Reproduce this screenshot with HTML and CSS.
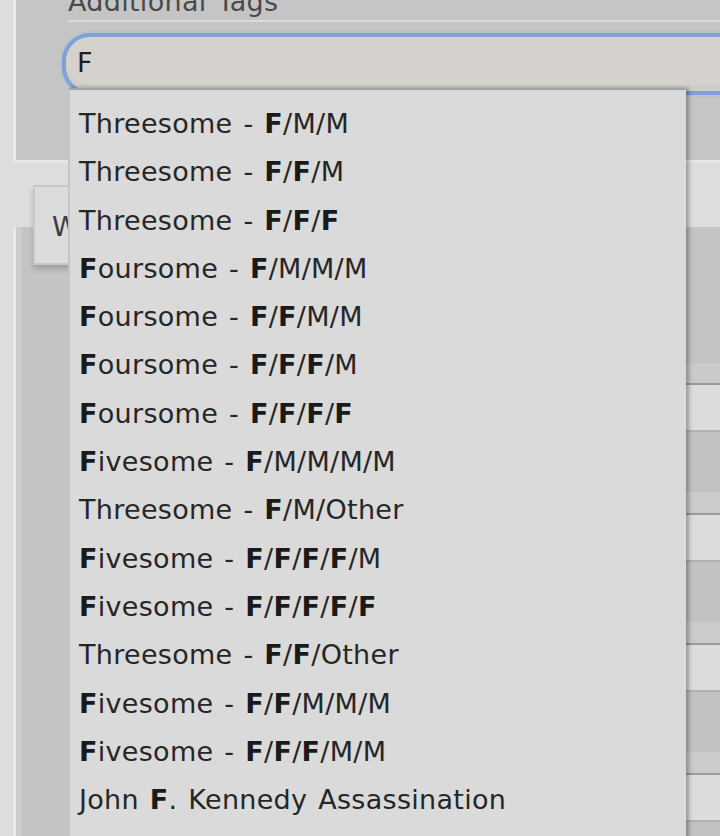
FILE: index.html
```html
<!DOCTYPE html>
<html lang="en">
<head>
<meta charset="utf-8">
<title>Additional Tags</title>
<link rel="stylesheet" href="styles.css">
</head>
<body>
<div class="page">
  <section class="panel top-panel">
    <div class="label">Additional Tags</div>
    <div class="input">F</div>
  </section>
  <div class="tabbar">
    <div class="tab">W</div>
  </div>
  <section class="panel table-panel">
    <div class="head"></div>
    <div class="rec"><div class="rec-light"></div><div class="rec-gray"></div></div>
    <div class="rec"><div class="rec-light"></div><div class="rec-gray"></div></div>
    <div class="rec"><div class="rec-light"></div><div class="rec-gray"></div></div>
    <div class="rec"><div class="rec-light"></div><div class="rec-gray"></div></div>
  </section>
  <ul class="dropdown">
    <li>Threesome - <b>F</b>/M/M</li>
    <li>Threesome - <b>F</b>/<b>F</b>/M</li>
    <li>Threesome - <b>F</b>/<b>F</b>/<b>F</b></li>
    <li><b>F</b>oursome - <b>F</b>/M/M/M</li>
    <li><b>F</b>oursome - <b>F</b>/<b>F</b>/M/M</li>
    <li><b>F</b>oursome - <b>F</b>/<b>F</b>/<b>F</b>/M</li>
    <li><b>F</b>oursome - <b>F</b>/<b>F</b>/<b>F</b>/<b>F</b></li>
    <li><b>F</b>ivesome - <b>F</b>/M/M/M/M</li>
    <li>Threesome - <b>F</b>/M/Other</li>
    <li><b>F</b>ivesome - <b>F</b>/<b>F</b>/<b>F</b>/<b>F</b>/M</li>
    <li><b>F</b>ivesome - <b>F</b>/<b>F</b>/<b>F</b>/<b>F</b>/<b>F</b></li>
    <li>Threesome - <b>F</b>/<b>F</b>/Other</li>
    <li><b>F</b>ivesome - <b>F</b>/<b>F</b>/M/M/M</li>
    <li><b>F</b>ivesome - <b>F</b>/<b>F</b>/<b>F</b>/M/M</li>
    <li>John <b>F</b>. Kennedy Assassination</li>
  </ul>
</div>
</body>
</html>
```
FILE: styles.css
```css
html, body {
  margin: 0;
  padding: 0;
  height: 100%;
  overflow: hidden;
  background: #dddddd;
}

.page {
  position: relative;
  height: 836px;
  overflow: hidden;
  font-family: "DejaVu Sans", Verdana, sans-serif;
  font-size: 27px;
  color: #222;
}

.panel {
  margin-left: 13px;
  border-left: 3px solid #e9e9e9;
  background: #c5c5c5;
}

.top-panel {
  height: 163px;
  border-bottom: 3px solid #e6e6e6;
  box-sizing: border-box;
  display: flex;
  flex-direction: column;
  align-items: flex-start;
}

.label {
  margin-top: -14px;
  margin-left: 52px;
  width: 700px;
  line-height: 32px;
  padding-bottom: 2px;
  border-bottom: 2px solid #dadada;
  color: #4a4a4a;
  word-spacing: 2px;
  letter-spacing: 0.3px;
}

.input {
  margin-top: 11px;
  margin-left: 46px;
  width: 700px;
  height: 54px;
  box-sizing: content-box;
  border: 4px solid #7fa1d3;
  border-right: 0;
  border-radius: 28px 0 0 28px;
  background: #d5d1cd;
  box-shadow: 0 0 2px 1px #a9bfdf, inset 0 -6px 0 #cfcdcb;
  padding-left: 11px;
  line-height: 52px;
  color: #1e1e1e;
}

.tabbar {
  height: 64px;
  padding-top: 22px;
  padding-left: 33px;
  box-sizing: border-box;
  position: relative;
  z-index: 1;
}

.tab {
  width: 110px;
  height: 80px;
  box-sizing: border-box;
  border: 2px solid #c8c8c8;
  background: #dcdcdc;
  box-shadow: 0 4px 5px rgba(0, 0, 0, 0.18);
  padding-left: 17px;
  padding-top: 20px;
  line-height: 40px;
  color: #3c3c3c;
}

.table-panel {
  height: 640px;
  background: linear-gradient(to right, #cccccc 0, #cccccc 6px, #c4c4c4 6px);
}

.head {
  height: 156px;
  margin-left: 60px;
  background: linear-gradient(to bottom, #c3c3c3 0, #c3c3c3 136px, #cacaca 136px);
}

.rec {
  margin-left: 60px;
  border-top: 2px solid #9a9a9a;
}

.rec-light {
  height: 45px;
  background: #dcdcdc;
  border-bottom: 2px solid #b2b2b2;
}

.rec-gray {
  height: 81px;
  background: linear-gradient(to bottom, #c2c2c2 0, #c2c2c2 60px, #cbcbcb 60px);
}

.dropdown {
  position: absolute;
  left: 68px;
  top: 88px;
  width: 618px;
  height: 760px;
  margin: 0;
  padding: 10px 0 0 0;
  list-style: none;
  box-sizing: border-box;
  background: #dadada;
  border-top: 2px solid #a3a3a3;
  border-left: 2px solid #c6c6c6;
  box-shadow: 3px 0 4px rgba(0, 0, 0, 0.3);
  z-index: 2;
}

.dropdown li {
  height: 48.3px;
  line-height: 48.3px;
  padding-left: 9px;
  white-space: nowrap;
  color: #262626;
  word-spacing: 2px;
  letter-spacing: 0.3px;
}

.dropdown b {
  font-weight: bold;
  color: #1a1a1a;
}
```
